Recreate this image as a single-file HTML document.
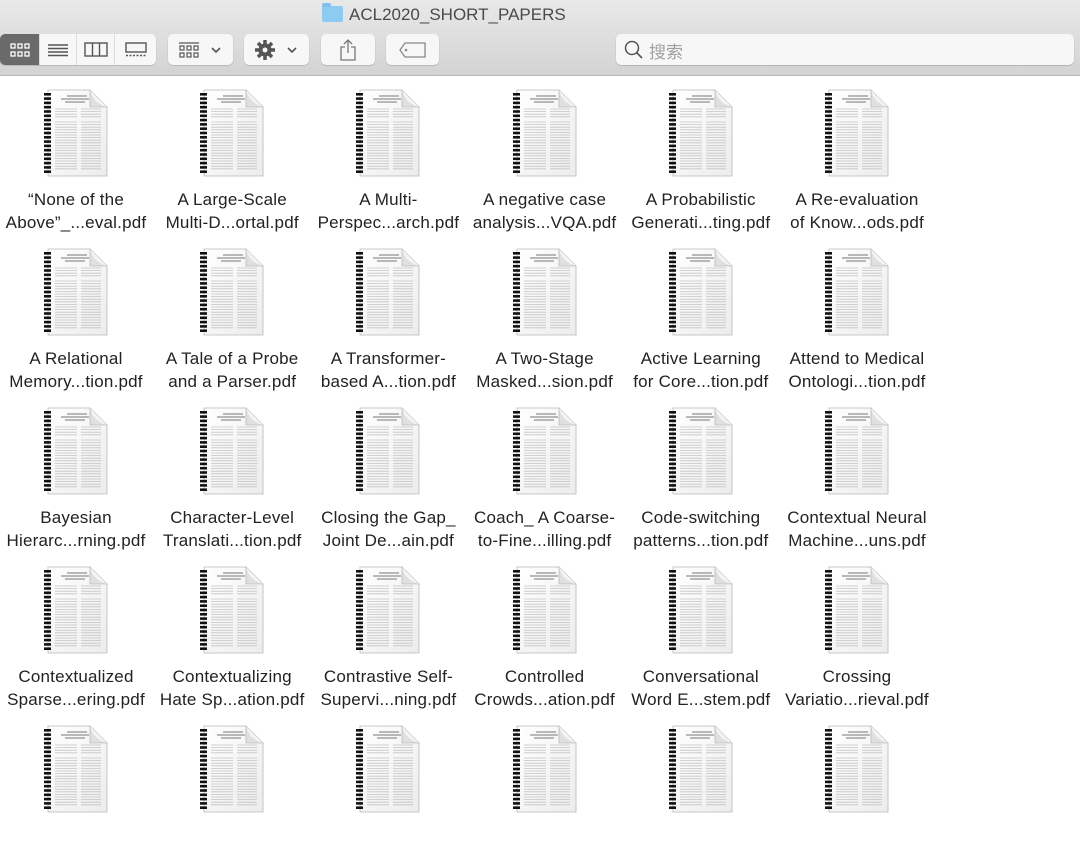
<!DOCTYPE html>
<html><head><meta charset="utf-8"><style>
*{margin:0;padding:0;box-sizing:border-box}
body{width:1080px;height:802px;overflow:hidden;background:#fff;font-family:"Liberation Sans","Noto Sans CJK SC",sans-serif;position:relative}
.tb{position:absolute;left:0;top:0;width:1080px;height:76px;background:linear-gradient(#e9e9e9,#d3d3d3);border-bottom:1px solid #b8b8b8}
.title{position:absolute;left:322px;top:5px;font-size:17px;color:#4a4a4a}
.folder{display:inline-block;width:21px;height:16px;background:#8ecbf3;border-radius:2px;vertical-align:-2px;margin-right:6px;position:relative}
.folder:before{content:"";position:absolute;left:0;top:-3px;width:9px;height:4px;background:#7fc0ee;border-radius:2px 2px 0 0}
.btn{position:absolute;top:34px;height:31px;background:#f7f7f7;border-radius:5px;box-shadow:0 0.5px 1px rgba(0,0,0,.25);display:flex;align-items:center;justify-content:center;color:#555}
.seg{position:absolute;left:0;top:34px;width:156px;height:31px;border-radius:5px;background:#f7f7f7;box-shadow:0 .5px 1px rgba(0,0,0,.25);overflow:hidden}
.seg div{position:absolute;top:0;height:31px;display:flex;align-items:center;justify-content:center;border-right:1px solid #ddd}
.search{position:absolute;left:616px;top:34px;width:458px;height:31px;background:#f7f7f7;border-radius:5px;box-shadow:0 .5px 1px rgba(0,0,0,.3);font-size:17px;color:#a0a0a0}
.item{position:absolute;width:156px;text-align:center}
.doc{display:block;margin:0 auto}
.lbl{margin-top:11px;font-size:17px;letter-spacing:0.2px;line-height:23px;color:#222;white-space:nowrap}
</style></head><body>
<div class="tb">
<div class="title"><span class="folder"></span>ACL2020_SHORT_PAPERS</div>
<div class="seg">
<div style="left:0;width:40px;background:#6a6a6a"><svg width="20" height="14"><g fill="none" stroke="#fff" stroke-width="1.3"><rect x="1" y="1" width="4" height="4"/><rect x="8" y="1" width="4" height="4"/><rect x="15" y="1" width="4" height="4"/><rect x="1" y="9" width="4" height="4"/><rect x="8" y="9" width="4" height="4"/><rect x="15" y="9" width="4" height="4"/></g></svg></div>
<div style="left:40px;width:37px"><svg width="20" height="14"><g stroke="#555" stroke-width="1.4"><path d="M0 2H20M0 5.5H20M0 9H20M0 12.5H20"/></g></svg></div>
<div style="left:77px;width:38px"><svg width="24" height="15"><g fill="none" stroke="#555" stroke-width="1.4"><rect x="1" y="1" width="22" height="13"/><path d="M8.5 1V14M15.5 1V14"/></g></svg></div>
<div style="left:115px;width:41px;border:0"><svg width="22" height="15"><g fill="none" stroke="#555" stroke-width="1.4"><rect x="1" y="1" width="20" height="9"/><path d="M1 13.5H21" stroke-dasharray="2 1.5"/></g></svg></div>
</div>
<div class="btn" style="left:168px;width:65px"><svg width="44" height="16"><g fill="none" stroke="#555" stroke-width="1.2"><path d="M0 1H20"/><rect x="1" y="4" width="4" height="4"/><rect x="8" y="4" width="4" height="4"/><rect x="15" y="4" width="4" height="4"/><rect x="1" y="11" width="4" height="4"/><rect x="8" y="11" width="4" height="4"/><rect x="15" y="11" width="4" height="4"/><path d="M33 6l4 4 4-4" stroke-width="1.6"/></g></svg></div>
<div class="btn" style="left:244px;width:65px"><svg width="46" height="22"><g fill="#555"><circle cx="11" cy="11" r="6.5"/><g stroke="#555" stroke-width="3.5"><path d="M11 1V21M1 11H21M4 4L18 18M18 4L4 18"/></g><circle cx="11" cy="11" r="2.5" fill="#f7f7f7"/></g><path d="M34 9l4 4 4-4" fill="none" stroke="#555" stroke-width="1.6"/></svg></div>
<div class="btn" style="left:321px;width:54px"><svg width="18" height="22"><g fill="none" stroke="#777" stroke-width="1.3"><path d="M6 8H2V21H16V8H12M9 1V14M5 5L9 1L13 5"/></g></svg></div>
<div class="btn" style="left:386px;width:53px"><svg width="28" height="16"><path d="M6 1H26V15H6L1 8Z" fill="none" stroke="#888" stroke-width="1.3"/><circle cx="7" cy="8" r="1.3" fill="#888"/></svg></div>
<div class="search"><svg style="position:absolute;left:8px;top:6px" width="20" height="20"><circle cx="8" cy="8" r="6.5" fill="none" stroke="#555" stroke-width="1.5"/><path d="M12.5 12.5L18 18" stroke="#555" stroke-width="1.6"/></svg><span style="position:absolute;left:33px;top:4px">搜索</span></div>
</div>
<div id="g"></div>
<script>
var L=[["“None of the","Above”_...eval.pdf"],["A Large-Scale","Multi-D...ortal.pdf"],["A Multi-","Perspec...arch.pdf"],["A negative case","analysis...VQA.pdf"],["A Probabilistic","Generati...ting.pdf"],["A Re-evaluation","of Know...ods.pdf"],
["A Relational","Memory...tion.pdf"],["A Tale of a Probe","and a Parser.pdf"],["A Transformer-","based A...tion.pdf"],["A Two-Stage","Masked...sion.pdf"],["Active Learning","for Core...tion.pdf"],["Attend to Medical","Ontologi...tion.pdf"],
["Bayesian","Hierarc...rning.pdf"],["Character-Level","Translati...tion.pdf"],["Closing the Gap_","Joint De...ain.pdf"],["Coach_ A Coarse-","to-Fine...illing.pdf"],["Code-switching","patterns...tion.pdf"],["Contextual Neural","Machine...uns.pdf"],
["Contextualized","Sparse...ering.pdf"],["Contextualizing","Hate Sp...ation.pdf"],["Contrastive Self-","Supervi...ning.pdf"],["Controlled","Crowds...ation.pdf"],["Conversational","Word E...stem.pdf"],["Crossing","Variatio...rieval.pdf"],
["",""],["",""],["",""],["",""],["",""],["",""]];
var lines="";
for(var y=20;y<82;y+=2.6){ if(y>29&&y<33)continue; lines+='<path d="M12 '+y.toFixed(1)+'H34M38 '+y.toFixed(1)+'H58"/>'; }
var sp="";
for(var y=4;y<84;y+=4.3){ sp+='<rect x="1" y="'+y.toFixed(1)+'" width="7" height="2.6"/>'; }
var doc='<svg class="doc" width="66" height="88" viewBox="0 0 66 88"><defs><linearGradient id="pg" x1="0" y1="0" x2="1" y2="1"><stop offset="0" stop-color="#fff"/><stop offset="1" stop-color="#ececec"/></linearGradient></defs>'+
'<path d="M5 1H47L64 18V87H5Z" fill="url(#pg)" stroke="#b8b8b8" stroke-width="0.8"/>'+
'<g stroke="#c4c4c4" stroke-width="0.8">'+lines+'</g>'+
'<path d="M24 7H44M18 10H46M22 13H42" stroke="#777" stroke-width="0.9"/>'+
'<path d="M47 1L47 18L64 18Z" fill="#e0e0e0" stroke="#aaa" stroke-width="0.6"/>'+
'<path d="M47 1Q50 14 64 18" fill="#f4f4f4"/>'+
'<g fill="#111">'+sp+'</g></svg>';
var h="";
for(var i=0;i<30;i++){var r=Math.floor(i/6),c=i%6;
h+='<div class="item" style="left:'+(c*156.2-2)+'px;top:'+(89+r*159)+'px">'+doc+'<div class="lbl">'+L[i][0]+'<br>'+L[i][1]+'</div></div>';}
document.getElementById("g").innerHTML=h;
</script>
</body></html>
